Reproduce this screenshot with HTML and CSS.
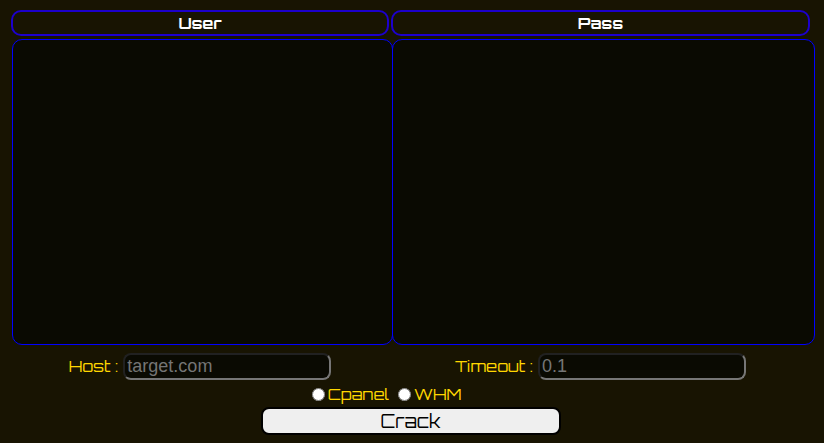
FILE: index.html
```html
<!DOCTYPE html>
<html lang="en">
<head>
<meta charset="utf-8">
<title>Crack</title>
<link rel="stylesheet" href="styles.css">
</head>
<body>
<form class="page">
  <div class="columns">
    <label class="heading" for="users">User</label>
    <label class="heading" for="passes">Pass</label>
  </div>
  <div class="lists">
    <textarea class="list" id="users"></textarea>
    <textarea class="list" id="passes"></textarea>
  </div>
  <div class="columns">
    <div class="field"><label for="host">Host :</label><input class="text" id="host" type="text" placeholder="target.com"></div>
    <div class="field"><label for="timeout">Timeout :</label><input class="text" id="timeout" type="text" placeholder="0.1"></div>
  </div>
  <div class="choices">
    <label class="choice"><input class="radio" type="radio" name="mode">Cpanel</label>
    <label class="choice"><input class="radio" type="radio" name="mode">WHM</label>
  </div>
  <button class="submit" type="button">Crack</button>
</form>
</body>
</html>
```
FILE: styles.css
```css
* {
  box-sizing: border-box;
}

body {
  margin: 0;
  background: #181402;
  color: #ffd700;
  font: 16px/20px Orbitron, "DejaVu Sans", sans-serif;
}

.page {
  display: flex;
  flex-direction: column;
  padding: 10px 14px 8px 11px;
}

.columns {
  display: grid;
  grid-template-columns: 378fr 419fr;
  gap: 2px;
}

.heading {
  padding: 1px;
  border: 2px solid #1c00cc;
  border-radius: 10px;
  color: #fff;
  font-weight: bold;
  text-align: center;
}

.lists {
  display: grid;
  grid-template-columns: 380fr 423fr;
  margin: 3px -5px 8px 1px;
}

.list {
  height: 306px;
  padding: 4px 8px;
  border: 1px solid #00f;
  border-radius: 10px;
  background: #0a0a02;
  color: #fff;
  font: inherit;
  resize: none;
}

.list:first-child {
  margin-right: -1px;
}

.field {
  display: flex;
  align-items: baseline;
  justify-content: center;
  gap: 5px;
}

.text {
  width: 208px;
  height: 27px;
  padding: 1px 2px;
  border: 2px solid;
  border-color: #212121 #767676 #767676 #212121;
  border-radius: 8px;
  background: #0a0a02;
  color: #fff;
  font: 18px "Liberation Sans", Arial, sans-serif;
}

.text::placeholder {
  color: #757575;
}

.choices {
  display: flex;
  justify-content: center;
  gap: 9px;
  margin: 4px 48px 3px 0;
}

.choice {
  display: flex;
  align-items: center;
  gap: 3px;
}

.radio {
  width: 13px;
  height: 13px;
  margin: 0;
}

.submit {
  align-self: center;
  width: 300px;
  height: 28px;
  padding: 0;
  border: 2px solid #000;
  border-radius: 8px;
  background: #efefef;
  color: #000;
  font: 18px/24px Orbitron, "DejaVu Sans", sans-serif;
}
```
